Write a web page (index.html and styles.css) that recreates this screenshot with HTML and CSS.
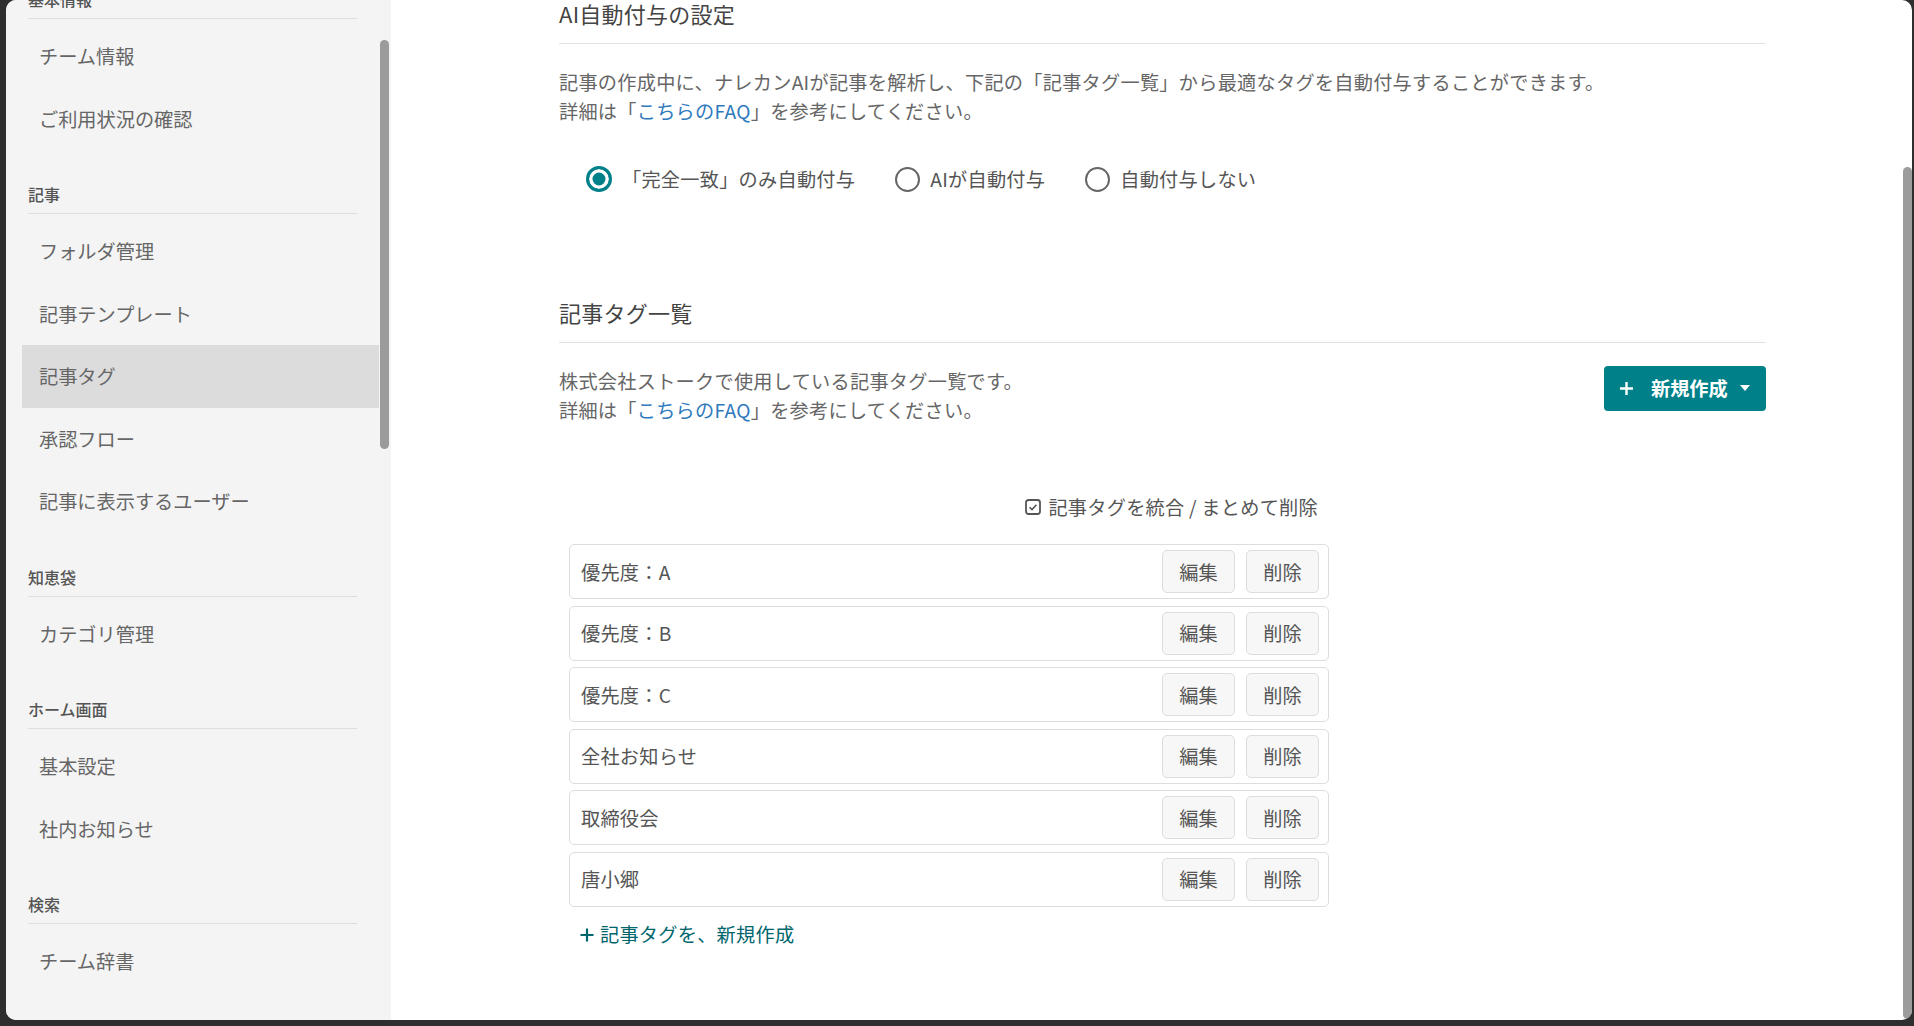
FILE: index.html
```html
<!DOCTYPE html>
<html lang="ja">

<head>
    <meta charset="UTF-8">
    <meta name="viewport" content="width=device-width, initial-scale=1.0">
    <title>記事タグ | 設定</title>
    <link rel="stylesheet" href="styles.css">
</head>

<body>
    <div class="window">
        <aside class="sidebar">
            <div class="sidebar-inner">
                <div class="nav-section">
                    <h3 class="nav-title">基本情報</h3>
                    <ul class="nav-list">
                        <li class="nav-item">チーム情報</li>
                        <li class="nav-item">ご利用状況の確認</li>
                    </ul>
                </div>
                <div class="nav-section">
                    <h3 class="nav-title">記事</h3>
                    <ul class="nav-list">
                        <li class="nav-item">フォルダ管理</li>
                        <li class="nav-item">記事テンプレート</li>
                        <li class="nav-item active">記事タグ</li>
                        <li class="nav-item">承認フロー</li>
                        <li class="nav-item">記事に表示するユーザー</li>
                    </ul>
                </div>
                <div class="nav-section">
                    <h3 class="nav-title">知恵袋</h3>
                    <ul class="nav-list">
                        <li class="nav-item">カテゴリ管理</li>
                    </ul>
                </div>
                <div class="nav-section">
                    <h3 class="nav-title">ホーム画面</h3>
                    <ul class="nav-list">
                        <li class="nav-item">基本設定</li>
                        <li class="nav-item">社内お知らせ</li>
                    </ul>
                </div>
                <div class="nav-section">
                    <h3 class="nav-title">検索</h3>
                    <ul class="nav-list">
                        <li class="nav-item">チーム辞書</li>
                    </ul>
                </div>
            </div>
            <div class="sidebar-thumb"></div>
        </aside>

        <main class="main">
            <section class="setting">
                <h2 class="setting-title">AI自動付与の設定</h2>
                <p class="setting-text">
                    記事の作成中に、ナレカンAIが記事を解析し、下記の「記事タグ一覧」から最適なタグを自動付与することができます。<br>
                    詳細は「<a href="#" class="faq-link">こちらのFAQ</a>」を参考にしてください。
                </p>
                <div class="radio-group">
                    <label class="radio"><span class="radio-mark checked"></span>「完全一致」のみ自動付与</label>
                    <label class="radio"><span class="radio-mark"></span>AIが自動付与</label>
                    <label class="radio"><span class="radio-mark"></span>自動付与しない</label>
                </div>
            </section>

            <section class="setting tags">
                <h2 class="setting-title">記事タグ一覧</h2>
                <div class="tags-head">
                    <p class="setting-text">
                        株式会社ストークで使用している記事タグ一覧です。<br>
                        詳細は「<a href="#" class="faq-link">こちらのFAQ</a>」を参考にしてください。
                    </p>
                    <button class="btn-primary">
                        <svg class="btn-plus" width="15" height="15" viewBox="0 0 15 15">
                            <path d="M7.5 1v13M1 7.5h13" stroke="#fff" stroke-width="2.4" fill="none" />
                        </svg>
                        <span class="btn-label">新規作成</span>
                        <svg class="btn-caret" width="12" height="8" viewBox="0 0 12 8">
                            <path d="M1 1h10L6 7z" fill="#fff" />
                        </svg>
                    </button>
                </div>

                <div class="tag-list">
                    <div class="bulk">
                        <svg width="16" height="16" viewBox="0 0 16 16">
                            <rect x="1" y="1" width="14" height="14" rx="2.5" fill="none" stroke="#555" stroke-width="1.8" />
                            <path d="M4.6 8.2l2.4 2.4 4.4-4.8" fill="none" stroke="#555" stroke-width="1.6" />
                        </svg>
                        記事タグを統合 / まとめて削除
                    </div>
                    <ul class="tag-rows">
                        <li class="tag-row">
                            <span class="tag-name">優先度：A</span>
                            <div class="tag-actions"><button class="tag-btn">編集</button><button class="tag-btn">削除</button></div>
                        </li>
                        <li class="tag-row">
                            <span class="tag-name">優先度：B</span>
                            <div class="tag-actions"><button class="tag-btn">編集</button><button class="tag-btn">削除</button></div>
                        </li>
                        <li class="tag-row">
                            <span class="tag-name">優先度：C</span>
                            <div class="tag-actions"><button class="tag-btn">編集</button><button class="tag-btn">削除</button></div>
                        </li>
                        <li class="tag-row">
                            <span class="tag-name">全社お知らせ</span>
                            <div class="tag-actions"><button class="tag-btn">編集</button><button class="tag-btn">削除</button></div>
                        </li>
                        <li class="tag-row">
                            <span class="tag-name">取締役会</span>
                            <div class="tag-actions"><button class="tag-btn">編集</button><button class="tag-btn">削除</button></div>
                        </li>
                        <li class="tag-row">
                            <span class="tag-name">唐小郷</span>
                            <div class="tag-actions"><button class="tag-btn">編集</button><button class="tag-btn">削除</button></div>
                        </li>
                    </ul>
                    <a href="#" class="add-link">
                        <svg width="14" height="14" viewBox="0 0 14 14">
                            <path d="M7 0.5v13M0.5 7h13" stroke="#00666d" stroke-width="2.2" fill="none" />
                        </svg>
                        記事タグを、新規作成
                    </a>
                </div>
            </section>
        </main>
        <div class="main-thumb"></div>
    </div>
</body>

</html>
```

FILE: styles.css
```css
html,
body {
    margin: 0;
    height: 100%;
    overflow: hidden;
    background: #2e2e2e;
}

body {
    font-family: "Noto Sans CJK JP", "Noto Sans", sans-serif;
}

.window {
    position: relative;
    display: flex;
    height: 1020px;
    margin: 0 2px 0 6px;
    border-radius: 10px;
    overflow: hidden;
    background: #fff;
}

/* sidebar */
.sidebar {
    position: relative;
    flex: 0 0 385px;
    background: #f4f4f4;
    overflow: hidden;
}

.sidebar-inner {
    width: 373px;
    margin-top: -13px;
}

.nav-title {
    margin: 32px 22px 0;
    padding-bottom: 7px;
    border-bottom: 1px solid #dedede;
    font-size: 16px;
    line-height: 24px;
    font-weight: 500;
    color: #555;
}

.nav-section:first-child .nav-title {
    margin-top: 0;
}

.nav-list {
    list-style: none;
    margin: 0;
    padding: 6px 0 0 16px;
}

.nav-item {
    height: 62.5px;
    line-height: 62.5px;
    padding-left: 17px;
    font-size: 19.2px;
    color: #666;
}

.nav-item.active {
    background: #dcdcdc;
}

.sidebar-thumb {
    position: absolute;
    left: 374px;
    top: 40px;
    width: 9px;
    height: 409px;
    border-radius: 5px;
    background: #9b9b9b;
}

.main-thumb {
    position: absolute;
    right: 0;
    top: 167px;
    width: 9px;
    height: 852px;
    border-radius: 5px;
    background: #9c9c9c;
}

/* main */
.main {
    flex: 1;
    padding-left: 168px;
    letter-spacing: 0.25px;
}

.setting {
    width: 1207px;
}

.setting-title {
    margin: 0;
    padding-bottom: 16px;
    border-bottom: 1px solid #e2e2e2;
    font-size: 22px;
    line-height: 27px;
    font-weight: 400;
    color: #444;
}

.setting-text {
    margin: 23.5px 0 0;
    font-size: 19.2px;
    line-height: 29px;
    color: #666;
}

.faq-link {
    color: #2f7abd;
    text-decoration: none;
}

.radio-group {
    display: flex;
    gap: 40px;
    margin-top: 39px;
    padding-left: 27px;
}

.radio {
    display: flex;
    align-items: center;
    gap: 10px;
    font-size: 19.2px;
    line-height: 29px;
    color: #555;
}

.radio-mark {
    box-sizing: border-box;
    width: 25px;
    height: 25px;
    border: 2.5px solid #666;
    border-radius: 50%;
}

.radio-mark.checked {
    width: 26px;
    height: 26px;
    border: 3px solid #00818a;
    background: #00818a;
    box-shadow: inset 0 0 0 3.5px #fff;
}

.tags {
    margin-top: 105.5px;
}

.tags-head {
    display: flex;
    justify-content: space-between;
    align-items: flex-start;
    margin-top: 23.5px;
}

.tags-head .setting-text {
    margin: 0;
}

.btn-primary {
    display: flex;
    align-items: center;
    flex-shrink: 0;
    box-sizing: border-box;
    width: 162px;
    height: 45px;
    margin-top: -1px;
    padding: 0 14px 0 15px;
    border: none;
    border-radius: 4px;
    background: #00818a;
    color: #fff;
    font-family: inherit;
    font-size: 19.2px;
    font-weight: 700;
    letter-spacing: 0;
    white-space: nowrap;
}

.btn-plus,
.btn-caret {
    flex-shrink: 0;
}

.btn-label {
    margin: 0 11px 0 17px;
}

.tag-list {
    width: 760px;
    margin-left: 10px;
}

.bulk {
    display: flex;
    justify-content: flex-end;
    align-items: center;
    gap: 7px;
    margin-top: 68px;
    padding-right: 11px;
    font-size: 19.2px;
    line-height: 29px;
    color: #555;
}

.tag-rows {
    list-style: none;
    margin: 22.5px 0 0;
    padding: 0;
    display: flex;
    flex-direction: column;
    gap: 6.5px;
}

.tag-row {
    box-sizing: border-box;
    height: 55px;
    display: flex;
    align-items: center;
    justify-content: space-between;
    padding: 0 9px 0 11px;
    border: 1px solid #ddd;
    border-radius: 5px;
    font-size: 19.2px;
    color: #555;
}

.tag-actions {
    display: flex;
    gap: 11px;
}

.tag-btn {
    width: 73px;
    height: 43px;
    border: 1px solid #ddd;
    border-radius: 5px;
    background: #f7f7f7;
    color: #555;
    font-family: inherit;
    font-size: 19.2px;
}

.add-link {
    display: inline-flex;
    align-items: center;
    gap: 6px;
    margin-top: 13.5px;
    padding-left: 11px;
    font-size: 19.2px;
    line-height: 29px;
    color: #00666d;
    text-decoration: none;
}
```
